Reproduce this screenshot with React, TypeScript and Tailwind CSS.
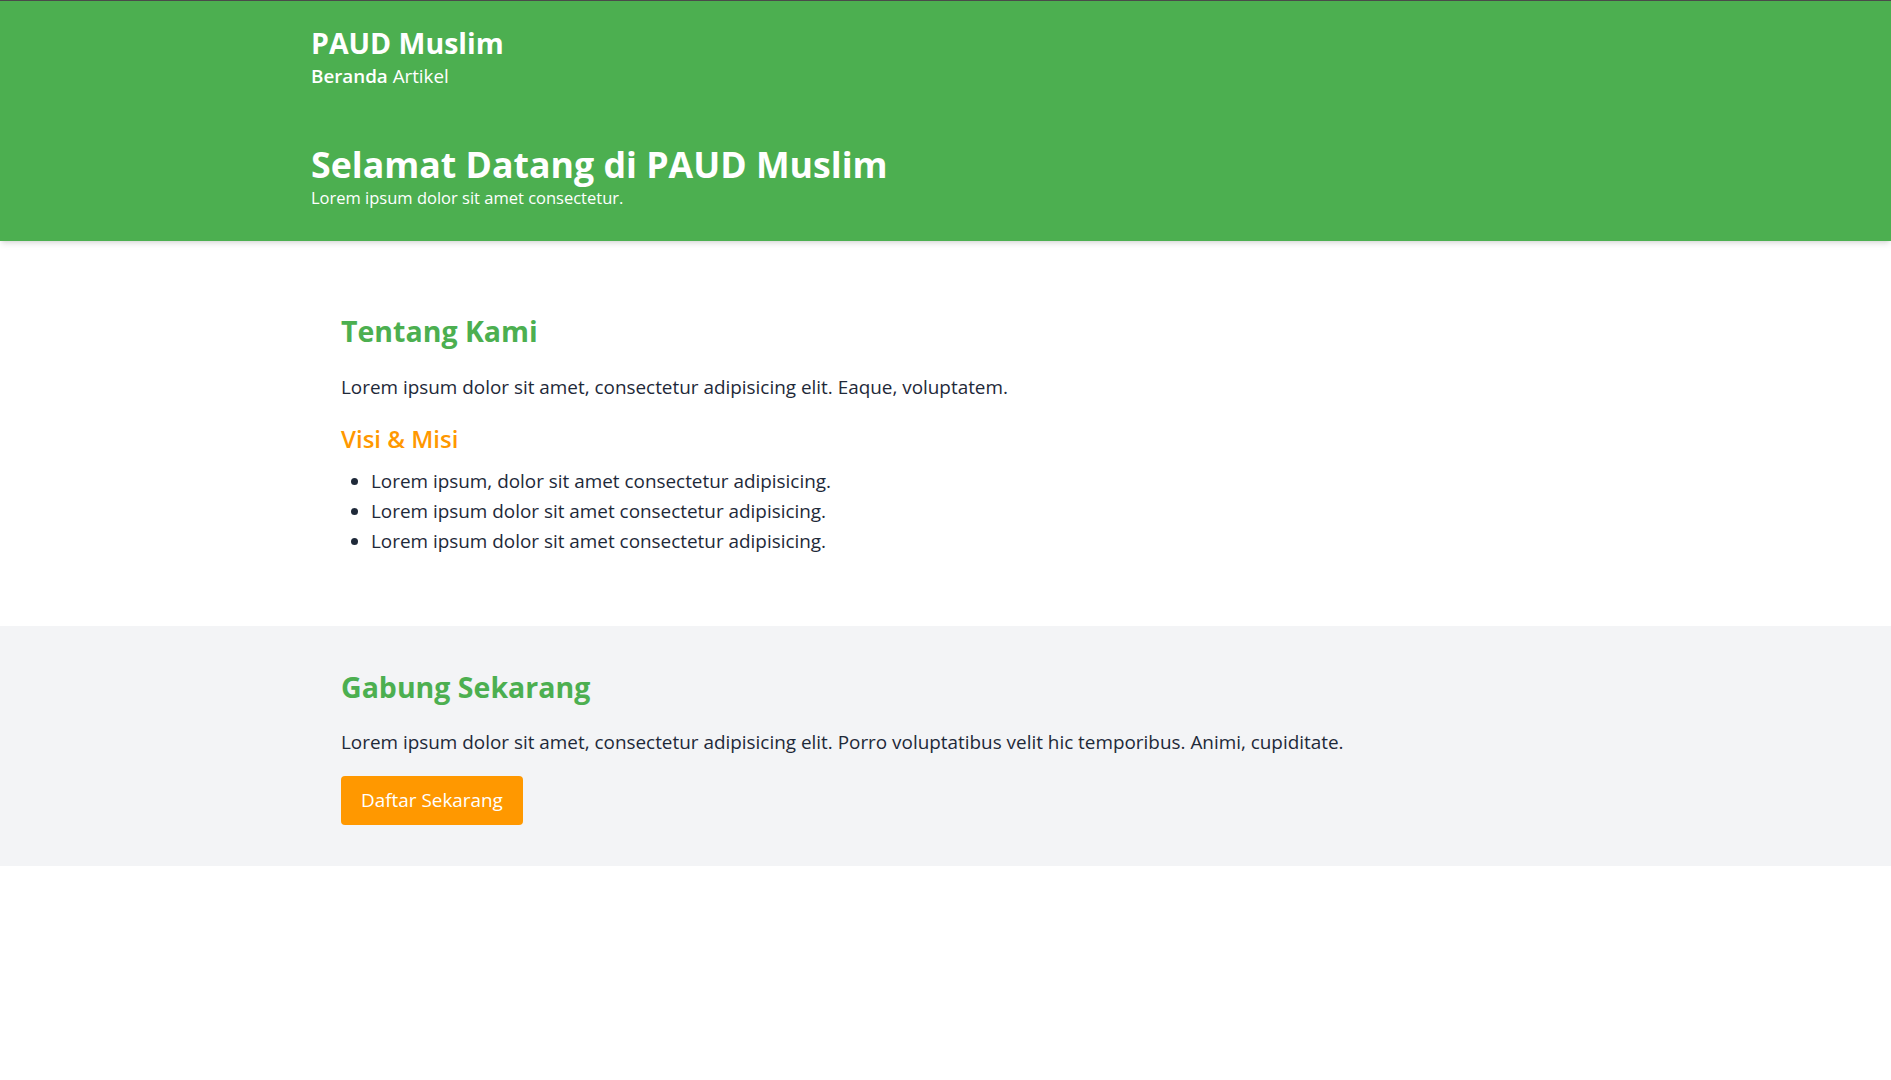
import React from 'react';

const font = { fontFamily: '"Open Sans", "Noto Sans", Arial, sans-serif' };

const visiMisi = [
  'Lorem ipsum, dolor sit amet consectetur adipisicing.',
  'Lorem ipsum dolor sit amet consectetur adipisicing.',
  'Lorem ipsum dolor sit amet consectetur adipisicing.',
];

const Header: React.FC = () => (
  <header className="bg-[#4CAF50] text-white border-t border-[#4a4a4a] shadow-md relative z-10">
    <div className="max-w-[1269px] mx-auto pt-[24px] pb-[29px]">
      <nav>
        <h1 className="text-[28.5px] font-bold leading-9">PAUD Muslim</h1>
        <div className="mt-[1px] text-[18.8px] leading-7">
          <a href="#" className="font-semibold">Beranda</a>{' '}
          <a href="#">Artikel</a>
        </div>
      </nav>
      <div className="mt-[54px]">
        <h2 className="text-[35.7px] font-bold leading-10">Selamat Datang di PAUD Muslim</h2>
        <p className="text-[16.5px] leading-7">Lorem ipsum dolor sit amet consectetur.</p>
      </div>
    </div>
  </header>
);

const App: React.FC = () => {
  return (
    <div className="min-h-screen bg-white text-gray-800" style={font}>
      <Header />

      <section className="pt-[72px] pb-[70px]">
        <div className="max-w-[1269px] mx-auto px-[30px]">
          <h2 className="text-[28.5px] font-bold leading-9 text-[#4CAF50]">Tentang Kami</h2>
          <p className="mt-6 text-[18.9px] leading-7">
            Lorem ipsum dolor sit amet, consectetur adipisicing elit. Eaque, voluptatem.
          </p>
          <h3 className="mt-[22px] text-2xl font-semibold leading-8 text-[#FF9800]">Visi &amp; Misi</h3>
          <ul className="mt-[11px] list-disc pl-[30px] text-[18.9px] leading-[30px]">
            {visiMisi.map((item, i) => (
              <li key={i}>{item}</li>
            ))}
          </ul>
        </div>
      </section>

      <section className="bg-gray-100 pt-[43px] pb-[41px]">
        <div className="max-w-[1269px] mx-auto px-[30px]">
          <h2 className="text-[28.5px] font-bold leading-9 text-[#4CAF50]">Gabung Sekarang</h2>
          <p className="mt-[23px] text-[18.9px] leading-7">
            Lorem ipsum dolor sit amet, consectetur adipisicing elit. Porro voluptatibus velit hic temporibus. Animi, cupiditate.
          </p>
          <button className="mt-5 h-[49px] px-5 rounded bg-[#FF9800] text-white text-[18.9px]">
            Daftar Sekarang
          </button>
        </div>
      </section>
    </div>
  );
};

export default App;
